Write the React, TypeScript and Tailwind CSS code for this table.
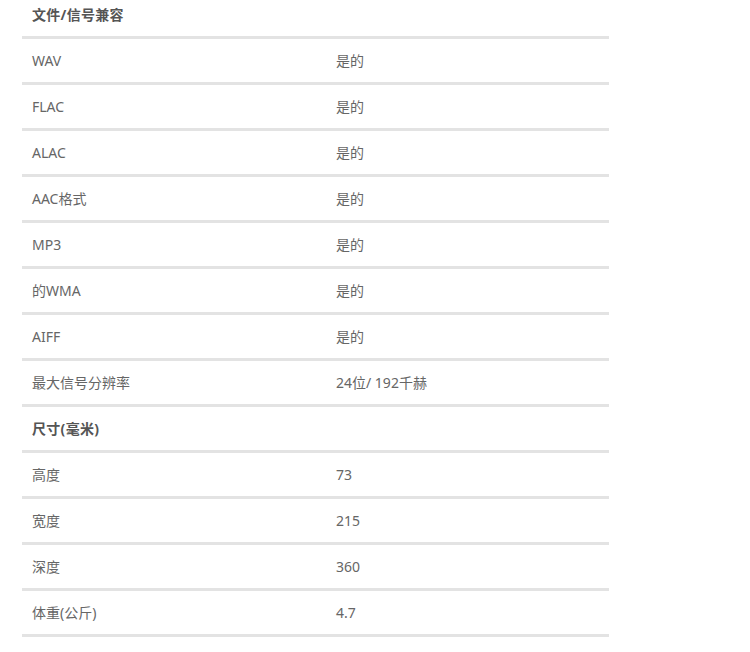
import React from "react";

type Row = { label: string; value?: string; header?: boolean };

const rows: Row[] = [
  { label: "文件/信号兼容", header: true },
  { label: "WAV", value: "是的" },
  { label: "FLAC", value: "是的" },
  { label: "ALAC", value: "是的" },
  { label: "AAC格式", value: "是的" },
  { label: "MP3", value: "是的" },
  { label: "的WMA", value: "是的" },
  { label: "AIFF", value: "是的" },
  { label: "最大信号分辨率", value: "24位/ 192千赫" },
  { label: "尺寸(毫米)", header: true },
  { label: "高度", value: "73" },
  { label: "宽度", value: "215" },
  { label: "深度", value: "360" },
  { label: "体重(公斤)", value: "4.7" },
];

export default function App() {
  return (
    <div
      className="w-[750px] h-[652px] overflow-hidden bg-white"
      style={{ fontFamily: '"Segoe UI", "Noto Sans", "Noto Sans CJK SC", sans-serif' }}
    >
      <div className="ml-[22px] w-[587px] -mt-[7px]">
        {rows.map((r, i) => (
          <div
            key={i}
            className="flex items-center h-[46px] border-b-[3px] border-[#e3e3e3] text-[14px]"
          >
            <div
              className={
                "w-[314px] pl-[10px] " +
                (r.header ? "font-bold text-[#555555] tracking-[0.3px]" : "text-[#666666]")
              }
            >
              {r.label}
            </div>
            <div className="text-[#666666]">{r.value ?? ""}</div>
          </div>
        ))}
      </div>
    </div>
  );
}
